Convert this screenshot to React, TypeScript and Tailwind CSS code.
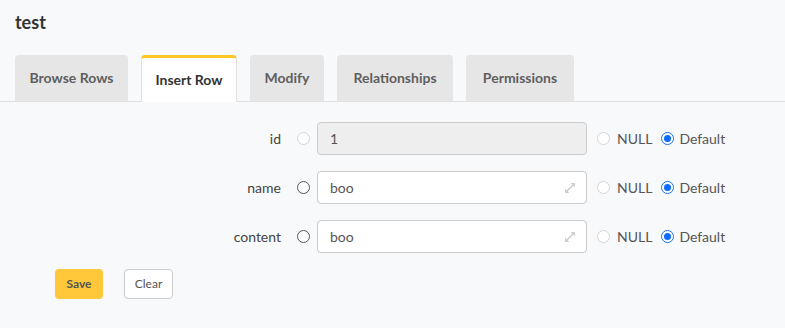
import { useState } from 'react';

// one row of the insert form
function Radio({ checked, disabled, dark }: { checked?: boolean; disabled?: boolean; dark?: boolean }) {
  if (checked) {
    return (
      <span className="w-[13px] h-[13px] rounded-full border-[1.5px] border-[#1a73e8] bg-white flex items-center justify-center shrink-0">
        <span className="block w-[7px] h-[7px] rounded-full bg-[#0b6bff]" />
      </span>
    );
  }
  return (
    <span
      className={
        'block w-[13px] h-[13px] rounded-full border bg-white shrink-0 ' +
        (disabled ? 'border-[#d4d4d4]' : dark ? 'border-[#555]' : 'border-[#cfcfcf]')
      }
    />
  );
}

function ExpandIcon() {
  return (
    <svg width="12" height="12" viewBox="0 0 11 11" className="text-[#cccccc]">
      <path d="M6.2 1H10V4.8Z" fill="currentColor" />
      <path d="M1 6.2V10H4.8Z" fill="currentColor" />
      <path d="M8.5 2.5L2.5 8.5" stroke="currentColor" strokeWidth="1.3" />
    </svg>
  );
}

function Row({ label, value, locked }: { label: string; value: string; locked?: boolean }) {
  return (
    <div className="flex items-center h-[33px]">
      <div className="w-[266px] text-right text-sm text-[#444]">{label}</div>
      <div className="ml-4">
        <Radio disabled={locked} dark={!locked} />
      </div>
      <div
        className={
          'ml-[7px] w-[270px] h-[33px] rounded border border-[#cccccc] flex items-center pl-3 pr-[10px] text-sm text-[#555] ' +
          (locked ? 'bg-[#eeeeee]' : 'bg-white')
        }
      >
        <span className="flex-1">{value}</span>
        {!locked && <ExpandIcon />}
      </div>
      <div className="ml-[10px] flex items-center gap-[7px]">
        <Radio disabled />
        <span className="text-sm text-[#555]">NULL</span>
      </div>
      <div className="ml-[9px] flex items-center gap-[5px]">
        <Radio checked />
        <span className="text-sm text-[#555]">Default</span>
      </div>
    </div>
  );
}

export default function App() {
  const [tab] = useState('Insert Row');
  const tabs = [
    ['Browse Rows', 'w-[113px]'],
    ['Insert Row', 'w-[96px]'],
    ['Modify', 'w-[74px]'],
    ['Relationships', 'w-[116px]'],
    ['Permissions', 'w-[108px]'],
  ];

  return (
    <div className="w-[785px] h-[328px] bg-[#f8f9fa] font-['Lato',sans-serif] overflow-hidden">

      {/* HEADER */}
      <h2 className="pl-[15px] pt-[10px] text-lg font-bold text-[#333] leading-6">test</h2>

      {/* TABS */}
      <div className="mt-[21px] flex items-end gap-[13px] pl-[15px] border-b border-[#e0e0e0] h-[47px]">
        {tabs.map(([name, w]) =>
          name === tab ? (
            <div
              key={name}
              className={w + ' h-[47px] -mb-px bg-white border-t-[3px] border-[#ffc627] border-x border-x-[#e0e0e0] rounded-t flex items-center justify-center text-sm font-bold text-[#333]'}
            >
              {name}
            </div>
          ) : (
            <div
              key={name}
              className={w + ' h-[46px] bg-[#e6e6e6] rounded-t flex items-center justify-center text-sm font-bold text-[#5f5f5f]'}
            >
              {name}
            </div>
          )
        )}
      </div>

      {/* FORM */}
      <div className="pl-[15px] pt-[20px] flex flex-col gap-4">
        <Row label="id" value="1" locked />
        <Row label="name" value="boo" />
        <Row label="content" value="boo" />
      </div>

      <div className="pl-[55px] pt-4 flex items-center gap-[21px]">
        <button className="w-[48px] h-[30px] rounded bg-[#ffc73a] text-xs font-bold text-[#555]">Save</button>
        <button className="w-[49px] h-[30px] rounded border border-[#cccccc] bg-white text-xs text-[#555]">Clear</button>
      </div>

    </div>
  );
}
